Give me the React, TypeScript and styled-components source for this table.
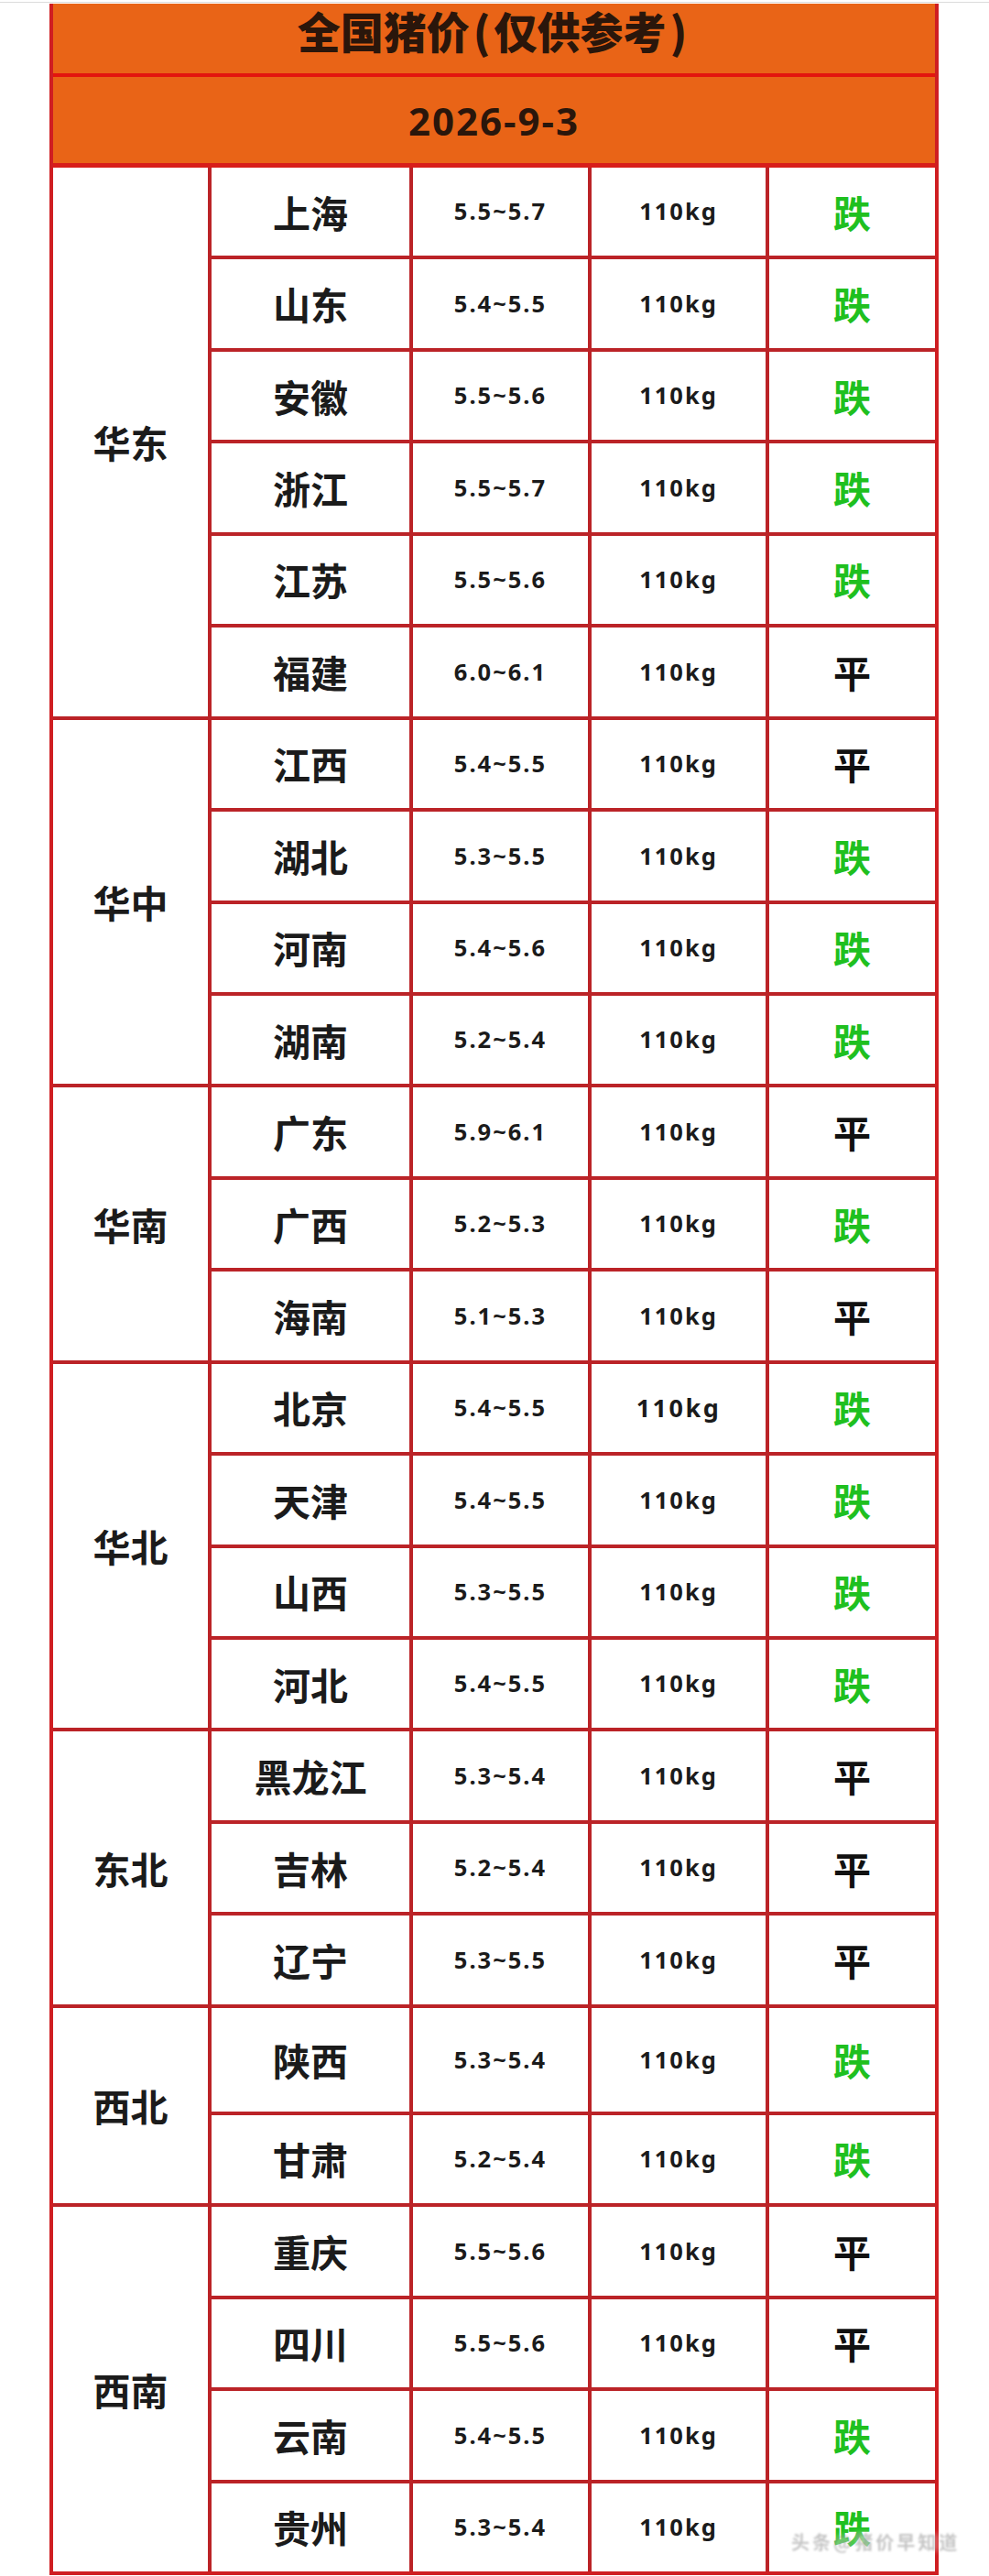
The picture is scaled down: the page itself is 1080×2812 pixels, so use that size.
import React from "react";
import styled, { createGlobalStyle } from "styled-components";

const GlobalStyle = createGlobalStyle`
  html, body {
    margin: 0;
    padding: 0;
    background: #ffffff;
  }
  body {
    font-family: "Noto Sans", "Noto Sans CJK SC", sans-serif;
    -webkit-font-smoothing: antialiased;
  }
`;

type Trend = "跌" | "平";

interface Row {
  name: string;
  price: string;
  weight: string;
  trend: Trend;
  tall?: boolean;
  bigWeight?: boolean;
}

interface Region {
  region: string;
  rows: Row[];
}

const w = "110kg";

const data: Region[] = [
  {
    region: "华东",
    rows: [
      { name: "上海", price: "5.5~5.7", weight: w, trend: "跌" },
      { name: "山东", price: "5.4~5.5", weight: w, trend: "跌" },
      { name: "安徽", price: "5.5~5.6", weight: w, trend: "跌" },
      { name: "浙江", price: "5.5~5.7", weight: w, trend: "跌" },
      { name: "江苏", price: "5.5~5.6", weight: w, trend: "跌" },
      { name: "福建", price: "6.0~6.1", weight: w, trend: "平" },
    ],
  },
  {
    region: "华中",
    rows: [
      { name: "江西", price: "5.4~5.5", weight: w, trend: "平" },
      { name: "湖北", price: "5.3~5.5", weight: w, trend: "跌" },
      { name: "河南", price: "5.4~5.6", weight: w, trend: "跌" },
      { name: "湖南", price: "5.2~5.4", weight: w, trend: "跌" },
    ],
  },
  {
    region: "华南",
    rows: [
      { name: "广东", price: "5.9~6.1", weight: w, trend: "平" },
      { name: "广西", price: "5.2~5.3", weight: w, trend: "跌" },
      { name: "海南", price: "5.1~5.3", weight: w, trend: "平" },
    ],
  },
  {
    region: "华北",
    rows: [
      { name: "北京", price: "5.4~5.5", weight: w, trend: "跌", bigWeight: true },
      { name: "天津", price: "5.4~5.5", weight: w, trend: "跌" },
      { name: "山西", price: "5.3~5.5", weight: w, trend: "跌" },
      { name: "河北", price: "5.4~5.5", weight: w, trend: "跌" },
    ],
  },
  {
    region: "东北",
    rows: [
      { name: "黑龙江", price: "5.3~5.4", weight: w, trend: "平" },
      { name: "吉林", price: "5.2~5.4", weight: w, trend: "平" },
      { name: "辽宁", price: "5.3~5.5", weight: w, trend: "平" },
    ],
  },
  {
    region: "西北",
    rows: [
      { name: "陕西", price: "5.3~5.4", weight: w, trend: "跌", tall: true },
      { name: "甘肃", price: "5.2~5.4", weight: w, trend: "跌" },
    ],
  },
  {
    region: "西南",
    rows: [
      { name: "重庆", price: "5.5~5.6", weight: w, trend: "平" },
      { name: "四川", price: "5.5~5.6", weight: w, trend: "平" },
      { name: "云南", price: "5.4~5.5", weight: w, trend: "跌" },
      { name: "贵州", price: "5.3~5.4", weight: w, trend: "跌" },
    ],
  },
];

const Page = styled.div`
  position: relative;
  width: 1080px;
  padding-top: 2px;
`;

const TopRule = styled.div`
  height: 1px;
  background: #dcdcdc;
  margin-bottom: 1px;
`;

const Table = styled.div`
  margin-left: 54px;
  width: 963px;
  border: 4px solid #cf1e22;
  border-top: none;
  display: flex;
  flex-direction: column;
`;

const Title = styled.div`
  height: 80px;
  box-sizing: border-box;
  padding-bottom: 20px;
  background: #e96417;
  border-bottom: 4px solid #e3150e;
  display: flex;
  align-items: center;
  justify-content: center;
  font-family: "Noto Sans CJK SC", sans-serif;
  font-weight: 900;
  font-size: 47px;
  color: #2a160b;
`;

const Paren = styled.span`
  display: inline-block;
  margin: 0 4px;
`;

const DateRow = styled.div`
  height: 94px;
  background: #e96417;
  border-bottom: 5px solid #d81d1a;
  display: flex;
  align-items: center;
  justify-content: center;
  font-family: "Noto Sans", "Noto Sans CJK SC", sans-serif;
  font-weight: 700;
  font-size: 42px;
  letter-spacing: 2px;
  color: #2a160b;
`;

const Grid = styled.div`
  display: grid;
  grid-template-columns: 169px 216px 191px 190px 181px;
  gap: 4px;
  background: #bb2327;
`;

const Cell = styled.div<{ $col: number; $h?: number; $span?: number }>`
  grid-column: ${(p) => p.$col};
  ${(p) => (p.$span ? `grid-row: span ${p.$span};` : "")}
  ${(p) => (p.$h ? `height: ${p.$h}px;` : "")}
  background: #ffffff;
  display: flex;
  align-items: center;
  justify-content: center;
  color: #1b1b1b;
`;

const CjkText = styled.span`
  font-family: "Noto Sans CJK SC", sans-serif;
  font-weight: 700;
  font-size: 41px;
  line-height: 1;
`;

const NumText = styled.span<{ $big?: boolean }>`
  font-family: "Noto Sans", "Open Sans", sans-serif;
  font-weight: 700;
  font-size: ${(p) => (p.$big ? 27 : 25.5)}px;
  letter-spacing: ${(p) => (p.$big ? 2.5 : 2)}px;
  line-height: 1;
`;

const TrendText = styled.span<{ $down: boolean }>`
  font-family: "Noto Sans CJK SC", sans-serif;
  font-weight: 700;
  font-size: 41px;
  line-height: 1;
  color: ${(p) => (p.$down ? "#1fc01f" : "#111111")};
`;

const Watermark = styled.div`
  position: absolute;
  left: 864px;
  top: 2760px;
  width: 188px;
  overflow: hidden;
  font-family: "Noto Sans CJK SC", sans-serif;
  font-size: 20px;
  font-weight: 700;
  letter-spacing: 3px;
  color: rgba(110, 110, 110, 0.4);
  filter: blur(1.3px);
  text-shadow: 0 0 6px rgba(255, 255, 255, 0.9);
  white-space: nowrap;
`;

const ROW_H = 96.45;
const TALL_H = 113;

export default function App() {
  return (
    <>
      <GlobalStyle />
      <Page>
        <TopRule />
        <Table>
          <Title>
            全国猪价<Paren>(</Paren>仅供参考<Paren>)</Paren>
          </Title>
          <DateRow>2026-9-3</DateRow>
          <Grid>
            {data.map((g) => (
              <React.Fragment key={g.region}>
                <Cell $col={1} $span={g.rows.length}>
                  <CjkText>{g.region}</CjkText>
                </Cell>
                {g.rows.map((r) => {
                  const h = r.tall ? TALL_H : ROW_H;
                  return (
                    <React.Fragment key={r.name}>
                      <Cell $col={2} $h={h}>
                        <CjkText>{r.name}</CjkText>
                      </Cell>
                      <Cell $col={3} $h={h}>
                        <NumText>{r.price}</NumText>
                      </Cell>
                      <Cell $col={4} $h={h}>
                        <NumText $big={r.bigWeight}>{r.weight}</NumText>
                      </Cell>
                      <Cell $col={5} $h={h}>
                        <TrendText $down={r.trend === "跌"}>{r.trend}</TrendText>
                      </Cell>
                    </React.Fragment>
                  );
                })}
              </React.Fragment>
            ))}
          </Grid>
        </Table>
        <Watermark>头条@猪价早知道</Watermark>
      </Page>
    </>
  );
}
